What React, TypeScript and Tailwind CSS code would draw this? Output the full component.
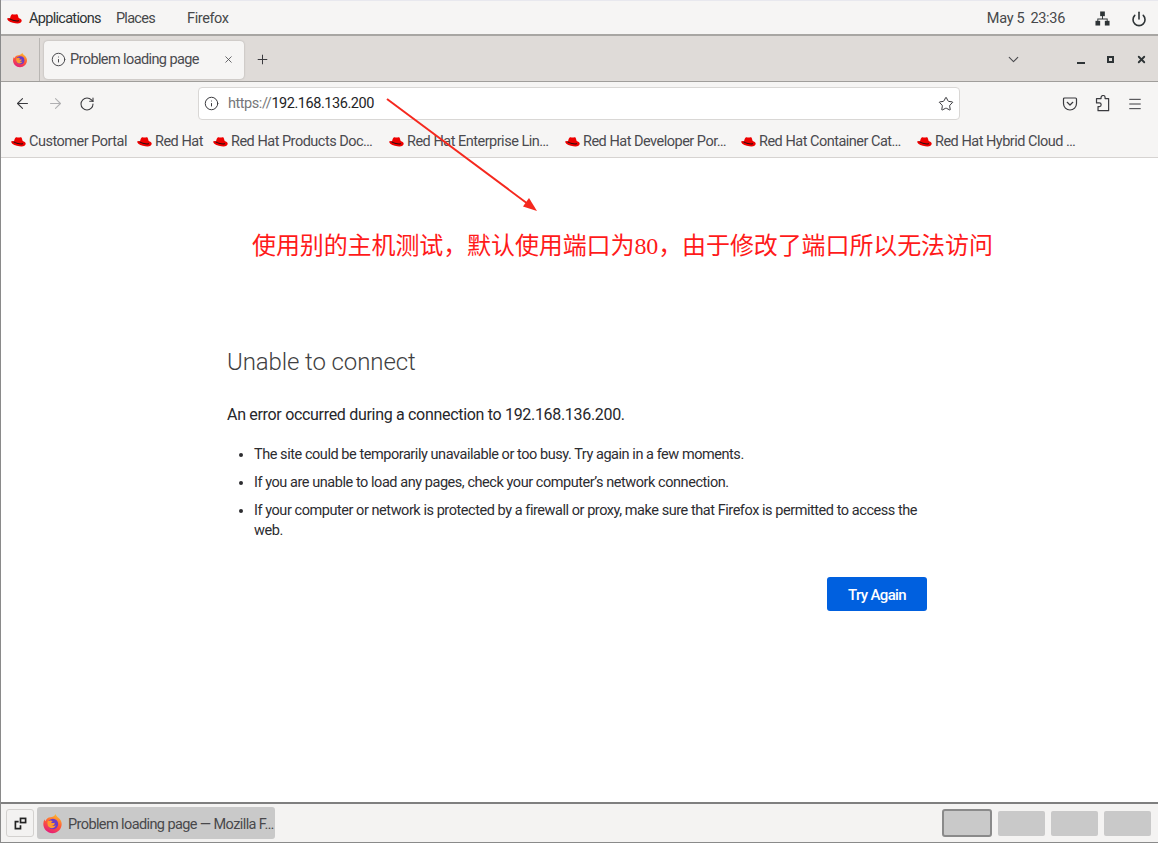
import React from "react";
import { Info, X, Plus, ArrowLeft, ArrowRight, RotateCw, Star, ChevronDown, Menu, Power } from "lucide-react";

const bookmarks = [
  { label: "Customer Portal", width: "w-[126px]" },
  { label: "Red Hat", width: "w-[76px]" },
  { label: "Red Hat Products Doc…", width: "w-[176px]" },
  { label: "Red Hat Enterprise Lin…", width: "w-[176px]" },
  { label: "Red Hat Developer Por…", width: "w-[176px]" },
  { label: "Red Hat Container Cat…", width: "w-[176px]" },
  { label: "Red Hat Hybrid Cloud …", width: "w-[176px]" },
];

function RedHat({ className }: { className?: string }) {
  return (
    <svg viewBox="0 0 16 12" className={className}>
      <path d="M5 1.200c1-.6 2 .1 3 .1s1.800-.8 2.800-.3c.8.4 1.200 2.600 1.700 4 1.500.5 3.200 1.400 3.200 2.800 0 1.700-2 3-4.500 3-2.500 0-7.500-1.200-9.800-3C.5 7 0 6.200.5 5.200 1 4.500 2.400 5 3.200 5.300 3.700 3.800 4 1.800 5 1.200z" fill="#e00" />
      <path d="M2.800 5.200c2.500 1.700 6.500 3 9.900 2.200l.3 1c-3.500.6-8-.9-10.600-2.500z" fill="#111" />
    </svg>
  );
}

function FirefoxLogo({ className, id }: { className?: string; id: string }) {
  return (
    <svg viewBox="0 0 24 24" className={className}>
      <defs>
        <linearGradient id={id} x1="0.7" y1="0" x2="0.3" y2="1">
          <stop offset="0" stopColor="#ffbd2e" />
          <stop offset="0.5" stopColor="#ff5a36" />
          <stop offset="1" stopColor="#e3197d" />
        </linearGradient>
      </defs>
      <path d="M15.500 1c.6 2 1.800 3 3.300 4.300C21 7.300 22.500 9.500 22.500 12.500c0 5.800-4.700 10.500-10.500 10.500S1.500 18.300 1.500 12.500c0-2 .5-3.800 1.500-5.300.1 1 .5 1.800 1 2.300C4.500 6.500 7 5 9.500 4.800 11.500 4.500 14.500 3.500 15.500 1z" fill={`url(#${id})`} />
      <circle cx="12.500" cy="12.500" r="6" fill="#6a3bc8" />
      <path d="M6.500 9.500c2-1.200 4.500-1 6 0-1 .3-1.800.8-2 1.500 1.500.5 3 .5 4 0 .2 2-1.300 3.500-3 3.500 1 .7 3 .6 4.300-.5-1 3-4.300 4-6.800 2.800-2.500-1.200-3.500-4.800-2.500-7.800z" fill="#ff9a2e" />
    </svg>
  );
}

function NetworkIcon() {
  return (
    <svg viewBox="0 0 16 16" className="w-[15px] h-[15px] text-[#2e3436]" fill="currentColor">
      <rect x="5.500" y="0.500" width="5" height="5" />
      <rect x="0.500" y="10.500" width="5" height="5" />
      <rect x="10.500" y="10.500" width="5" height="5" />
      <path d="M7.500 5h1v3h5v3h-1V9H3.500v2h-1V8h5z" />
    </svg>
  );
}

function PocketIcon() {
  return (
    <svg viewBox="0 0 16 16" className="w-4 h-4" fill="none" stroke="#3a3a3e" strokeWidth="1.200" strokeLinecap="round" strokeLinejoin="round">
      <path d="M2.500 2h11a1 1 0 0 1 1 1v4.500a6.500 6.500 0 0 1-13 0V3a1 1 0 0 1 1-1z" />
      <path d="M5.200 6.300 8 9l2.800-2.700" />
    </svg>
  );
}

function ExtensionIcon() {
  return (
    <svg viewBox="0 0 16 16" className="w-[17px] h-[17px]" fill="none" stroke="#3a3a3e" strokeWidth="1.200" strokeLinejoin="round">
      <path d="M3 3.500h3V2.500a2 2 0 0 1 4 0v1h3.500v12H3v-4h1.300a1.800 1.800 0 0 0 0-3.600H1.500V3.500z" transform="scale(0.95)" />
    </svg>
  );
}

export default function App() {
  return (
    <div className="relative w-[1158px] h-[843px] flex flex-col overflow-hidden bg-white border-l border-[#8a8a8a] font-['Roboto','Noto_Sans',sans-serif] text-[#3d3d40]">
      {/* GNOME top bar */}
      <div className="h-[36px] shrink-0 flex items-center pt-[2px] bg-[#f6f5f4] border-t border-[#e8e8ee] border-b-2 border-b-[#a8a6a3] text-[14.500px] tracking-[-0.7px] text-[#46484a]">
        <RedHat className="ml-[6px] w-[15px] h-[12px]" />
        <span className="ml-[7px] text-[#2e3436]">Applications</span>
        <span className="ml-[15px]">Places</span>
        <span className="ml-[32px] tracking-[-0.4px]">Firefox</span>
        <span className="ml-auto tracking-[-0.3px]">May 5</span>
        <span className="ml-[6px] tracking-[-0.3px]">23:36</span>
        <div className="ml-[30px]"><NetworkIcon /></div>
        <Power className="ml-[21px] mr-[11px] w-[16px] h-[16px] text-[#2e3436]" strokeWidth={2.400} />
      </div>

      {/* Tab strip */}
      <div className="h-[46px] shrink-0 flex items-center pt-[2px] bg-[#dfdbd8] border-b border-[#a09e9b]">
        <div className="w-[39px] h-full flex items-center justify-center border-r border-[#b9b6b3]">
          <FirefoxLogo id="ffTab" className="w-[16px] h-[16px] shrink-0" />
        </div>
        <div className="ml-[4px] w-[200px] h-[38px] flex items-center bg-[#f6f5f4] rounded-[4px] shadow-[0_0_2px_rgba(0,0,0,0.25)] px-[7px]">
          <Info className="w-[15px] h-[15px] shrink-0 text-[#4a4a4e]" strokeWidth={1.600} />
          <span className="ml-[4px] text-[14.500px] tracking-[-0.6px] text-[#4a4a4f] whitespace-nowrap">Problem loading page</span>
          <X className="ml-auto mr-[3px] w-[11px] h-[11px] text-[#4a4a4e]" strokeWidth={1.800} />
        </div>
        <Plus className="ml-[11px] w-[15px] h-[15px] text-[#3a3a3e]" strokeWidth={1.600} />
        <ChevronDown className="ml-[735px] w-[17px] h-[17px] text-[#4a4a4e]" strokeWidth={1.500} />
        <div className="ml-[55px] w-[8px] h-[2px] mt-[7px] bg-[#2e3436]" />
        <div className="ml-[22px] w-[7px] h-[7px] border-2 border-[#2e3436]" />
        <X className="ml-[22px] w-[11px] h-[11px] text-[#2e3436]" strokeWidth={4} />
      </div>

      {/* Nav bar */}
      <div className="h-[41px] shrink-0 flex items-center pt-[2px] bg-[#f6f5f4]">
        <ArrowLeft className="ml-[13px] w-[17px] h-[17px] text-[#3a3a3e]" strokeWidth={1.500} />
        <ArrowRight className="ml-[16px] w-[17px] h-[17px] text-[#b0b0b2]" strokeWidth={1.500} />
        <RotateCw className="ml-[15px] w-[16px] h-[16px] text-[#3a3a3e]" strokeWidth={1.600} />
        <div className="ml-[103px] w-[762px] h-[33px] flex items-center bg-white border border-[#d9d7d5] rounded-[4px]">
          <Info className="ml-[5px] w-[15px] h-[15px] text-[#3a3a3e]" strokeWidth={1.600} />
          <span className="ml-[9px] text-[14.500px] tracking-[-0.45px] text-[#77777a]">https://</span>
          <span className="text-[14.500px] tracking-[-0.45px] text-[#232326]">192.168.136.200</span>
          <Star className="ml-auto mr-[5px] w-[16px] h-[16px] text-[#3a3a3e]" strokeWidth={1.500} />
        </div>
        <div className="ml-[102px]"><PocketIcon /></div>
        <div className="ml-[17px]"><ExtensionIcon /></div>
        <Menu className="ml-[15px] w-[16px] h-[16px] text-[#3a3a3e]" strokeWidth={1.500} />
      </div>

      {/* Bookmarks */}
      <div className="h-[35px] shrink-0 flex items-center pt-[4px] pl-[10px] bg-[#f6f5f4] border-b border-[#d6d3d1] text-[14.500px] tracking-[-0.5px] text-[#4a4a4f]">
        {bookmarks.map((b) => (
          <div key={b.label} className={`${b.width} flex items-center gap-[3px] whitespace-nowrap`}>
            <RedHat className="w-[15px] h-[12px] shrink-0" />
            <span>{b.label}</span>
          </div>
        ))}
      </div>

      {/* Error page */}
      <main className="flex-1 bg-white pl-[226px] pt-[187px] pr-[230px]">
        <h1 className="text-[24px] leading-[34px] font-light tracking-[-0.1px] text-[#3f3f42]">Unable to connect</h1>
        <p className="mt-[24px] text-[16px] leading-[24px] tracking-[-0.31px] text-[#26262a]">An error occurred during a connection to 192.168.136.200.</p>
        <ul className="mt-[18px] pl-[27px] list-disc text-[14.500px] leading-[20px] tracking-[-0.45px] text-[#2c2c30] space-y-[8px]">
          <li>The site could be temporarily unavailable or too busy. Try again in a few moments.</li>
          <li>If you are unable to load any pages, check your computer’s network connection.</li>
          <li>If your computer or network is protected by a firewall or proxy, make sure that Firefox is permitted to access the web.</li>
        </ul>
        <div className="mt-[36px] pr-[1px] flex justify-end">
          <button className="w-[100px] h-[34px] pt-[2px] bg-[#0060df] rounded-[3px] text-white text-[15px] font-medium tracking-[-0.65px]">Try Again</button>
        </div>
      </main>

      {/* Window list */}
      <div className="h-[41px] shrink-0 flex items-center bg-[#f4f3f2] border-t-2 border-[#7f7f7f] border-b border-b-[#8a8a8a]">
        <div className="ml-[5px] w-[28px] h-[28px] flex items-center justify-center rounded-[3px] bg-[#f3f2f1] border border-[#d3d1cf]">
          <svg viewBox="0 0 14 14" className="w-[13px] h-[13px]" fill="none" stroke="#222" strokeWidth="1.800">
            <rect x="7" y="1.500" width="5.500" height="4.500" />
            <path d="M5 5H1.500v7.500H7V9" />
          </svg>
        </div>
        <div className="ml-[3px] w-[238px] h-[32px] flex items-center bg-[#c9c9c9] rounded-[3px]">
          <FirefoxLogo id="ffTask" className="ml-[5px] w-[21px] h-[21px] shrink-0" />
          <span className="ml-[5px] pt-[3px] text-[14.500px] tracking-[-0.6px] text-[#48484b] whitespace-nowrap">Problem loading page — Mozilla F…</span>
        </div>
        <div className="ml-auto mr-[7px] flex items-center gap-[6px]">
          <div className="w-[50px] h-[28px] bg-[#c9c9c9] rounded-[3px] border-2 border-[#8a8a8a]" />
          <div className="w-[47px] h-[25px] bg-[#c9c9c9] rounded-[2px]" />
          <div className="w-[47px] h-[25px] bg-[#c9c9c9] rounded-[2px]" />
          <div className="w-[47px] h-[25px] bg-[#c9c9c9] rounded-[2px]" />
        </div>
      </div>

      {/* Screenshot annotation */}
      <svg className="absolute left-[-1px] top-0 w-[1158px] h-[843px] pointer-events-none" viewBox="0 0 1158 843">
        <line x1="387" y1="99" x2="532" y2="207" stroke="#f5281e" strokeWidth="2" />
        <path d="M537 211 523 206.500 529 198z" fill="#f5281e" />
      </svg>
      <div className="absolute left-[251px] top-[231px] text-[24px] leading-[30px] tracking-[-0.1px] text-[#ff1a1a] whitespace-nowrap font-['Liberation_Serif','Noto_Sans_CJK_SC',serif]">
        使用别的主机测试，默认使用端口为80，由于修改了端口所以无法访问
      </div>
    </div>
  );
}
